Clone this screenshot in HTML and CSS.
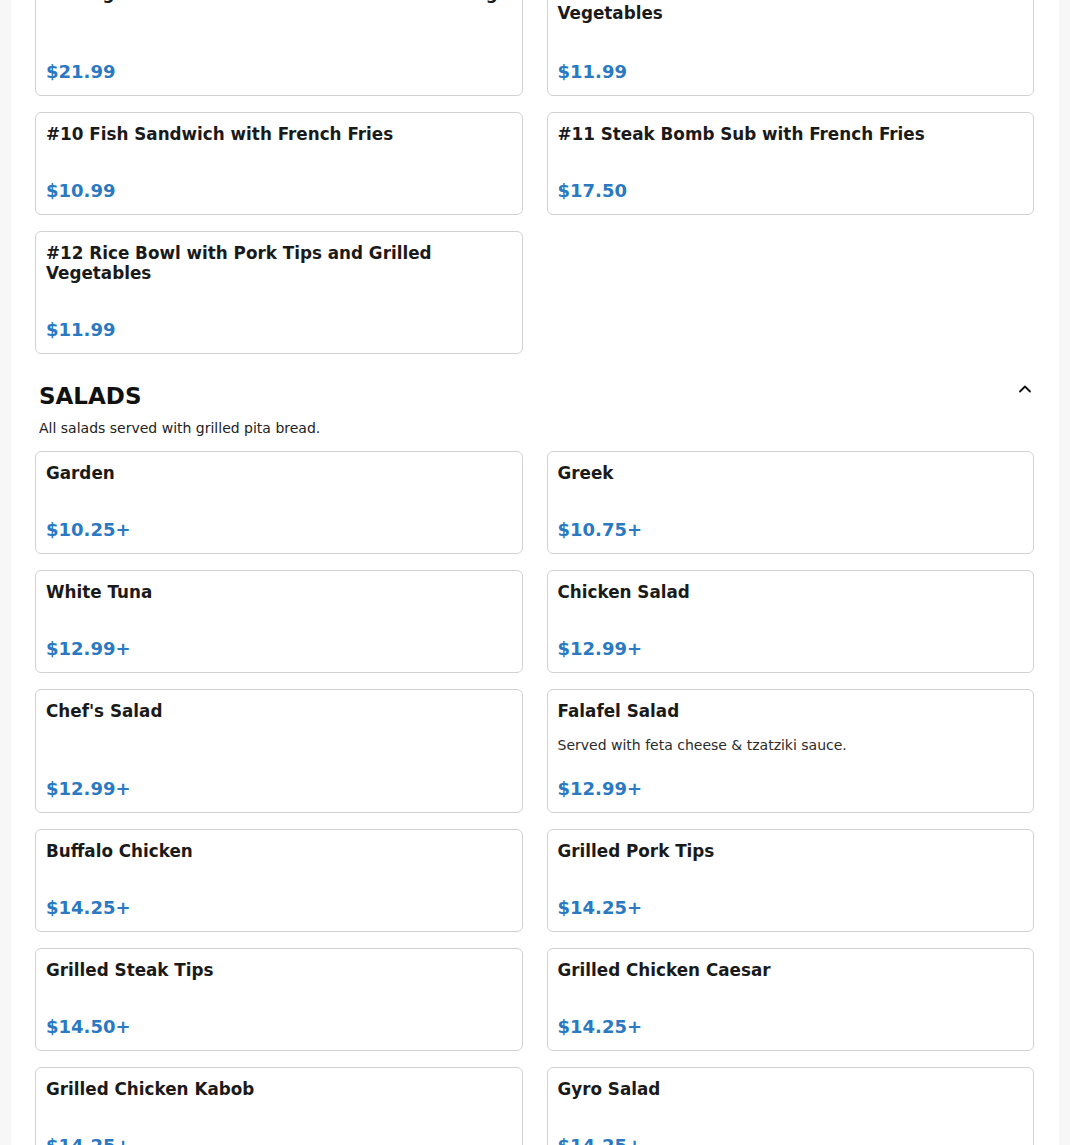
FILE: index.html
```html
<!DOCTYPE html>
<html lang="en">
<head>
<meta charset="utf-8">
<title>Menu</title>
<link rel="stylesheet" href="styles.css">
</head>
<body>
<main class="page">
  <section class="section section-first">
    <div class="grid">
      <div class="card card-cut"><h3 class="title">#8 Angus Sub with French Fries and Onion Rings</h3><div class="price">$21.99</div></div>
      <div class="card card-cut"><h3 class="title">#9 Rice Bowl with Chicken Kabob and Grilled Vegetables</h3><div class="price">$11.99</div></div>
      <div class="card"><h3 class="title">#10 Fish Sandwich with French Fries</h3><div class="price">$10.99</div></div>
      <div class="card"><h3 class="title">#11 Steak Bomb Sub with French Fries</h3><div class="price">$17.50</div></div>
      <div class="card"><h3 class="title">#12 Rice Bowl with Pork Tips and Grilled Vegetables</h3><div class="price">$11.99</div></div>
    </div>
  </section>

  <section class="section">
    <div class="section-head">
      <h2 class="section-title">SALADS</h2>
      <svg class="chevron" width="14" height="14" viewBox="0 0 14 14" aria-hidden="true"><path d="M2 9.5 L7 4.5 L12 9.5" fill="none" stroke="#111" stroke-width="1.8" stroke-linecap="round" stroke-linejoin="round"/></svg>
    </div>
    <p class="section-desc">All salads served with grilled pita bread.</p>
    <div class="grid">
      <div class="card"><h3 class="title">Garden</h3><div class="price">$10.25+</div></div>
      <div class="card"><h3 class="title">Greek</h3><div class="price">$10.75+</div></div>
      <div class="card"><h3 class="title">White Tuna</h3><div class="price">$12.99+</div></div>
      <div class="card"><h3 class="title">Chicken Salad</h3><div class="price">$12.99+</div></div>
      <div class="card"><h3 class="title">Chef's Salad</h3><div class="price">$12.99+</div></div>
      <div class="card"><h3 class="title">Falafel Salad</h3><p class="desc">Served with feta cheese &amp; tzatziki sauce.</p><div class="price">$12.99+</div></div>
      <div class="card"><h3 class="title">Buffalo Chicken</h3><div class="price">$14.25+</div></div>
      <div class="card"><h3 class="title">Grilled Pork Tips</h3><div class="price">$14.25+</div></div>
      <div class="card"><h3 class="title">Grilled Steak Tips</h3><div class="price">$14.50+</div></div>
      <div class="card"><h3 class="title">Grilled Chicken Caesar</h3><div class="price">$14.25+</div></div>
      <div class="card"><h3 class="title">Grilled Chicken Kabob</h3><div class="price">$14.25+</div></div>
      <div class="card"><h3 class="title">Gyro Salad</h3><div class="price">$14.25+</div></div>
    </div>
  </section>
</main>
</body>
</html>
```
FILE: styles.css
```css
html, body {
  margin: 0;
  padding: 0;
}
body {
  background: #f7f7f7;
  font-family: "DejaVu Sans", Verdana, sans-serif;
  color: #1a1a1a;
  overflow: hidden;
}
.page {
  background: #ffffff;
  margin: 0 11px;
  padding: 0 25px 40px 24px;
}
.section-first {
  margin-top: -27px;
}
.grid {
  display: grid;
  grid-template-columns: 1fr 1fr;
  column-gap: 24px;
  row-gap: 16px;
}
.card {
  display: flex;
  flex-direction: column;
  border: 1px solid #d2d2d2;
  border-radius: 6px;
  padding: 11px 10px 12px 10px;
  background: #fff;
}
.card-cut {
  padding-top: 9px;
  padding-bottom: 12px;
}
.title {
  margin: 0 0 14px 0;
  font-size: 16.8px;
  line-height: 20px;
  font-weight: bold;
  color: #1a1a1a;
}
.card-cut .price {
  padding-top: 24px;
}
.desc {
  margin: 0;
  font-size: 14px;
  line-height: 21px;
  color: #2b2b2b;
}
.price {
  margin-top: auto;
  padding-top: 22px;
  font-size: 18px;
  line-height: 22px;
  font-weight: bold;
  color: #2a79c2;
}
.section-head {
  display: flex;
  justify-content: space-between;
  align-items: flex-start;
  margin-top: 29px;
  padding: 0 2px 0 4px;
}
.section-title {
  margin: 0;
  font-size: 23px;
  line-height: 26px;
  font-weight: bold;
  color: #111;
}
.chevron {
  display: block;
  margin-top: -1px;
}
.section-desc {
  margin: 11px 0 14px 0;
  padding: 0 4px;
  font-size: 14px;
  line-height: 17px;
  color: #222;
}
```
